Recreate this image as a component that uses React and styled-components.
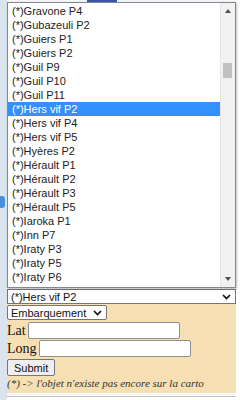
import React from 'react'
import styled, { createGlobalStyle } from 'styled-components'

const Global = createGlobalStyle`
body {
  margin: 0;
  background: #ffffff;
  font-family: 'Liberation Sans', Arial, sans-serif;
}
`

const rivers = [
  'Gravone P4', 'Gubazeuli P2', 'Guiers P1', 'Guiers P2', 'Guil P9', 'Guil P10',
  'Guil P11', 'Hers vif P2', 'Hers vif P4', 'Hers vif P5', 'Hyères P2',
  'Hérault P1', 'Hérault P2', 'Hérault P3', 'Hérault P5', 'Iaroka P1',
  'Inn P7', 'Iraty P3', 'Iraty P5', 'Iraty P6'
]

const Page = styled.div`
display: flex;
width: 240px;
height: 400px;
overflow: hidden;
`

const MapEdge = styled.div`
position: relative;
width: 7px;
background: #d9e4ee;
flex-shrink: 0;
`

const MapMark = styled.div`
position: absolute;
top: 196px;
left: -4px;
width: 9px;
height: 12px;
border-radius: 3px;
background: #4a90d9;
`

const Column = styled.div`
width: 229px;
display: flex;
flex-direction: column;
`

const TopArea = styled.div`
height: 289px;
background: #f3f5f7;
position: relative;
`

const Logo = styled.div`
position: absolute;
top: 0;
left: 80px;
width: 30px;
height: 3px;
background: #3b55a8;
`

const Panel = styled.div`
background: #f6dfb3;
display: flex;
flex-direction: column;
align-items: flex-start;
`

const SelectWrap = styled.div`
position: relative;
width: 229px;
`

const Closed = styled.div`
box-sizing: border-box;
display: flex;
align-items: center;
justify-content: space-between;
height: ${p => p.$h}px;
width: ${p => p.$w}px;
padding: 0 4px 0 3px;
background: #ffffff;
border: 1px solid #767676;
border-radius: ${p => p.$r}px;
font-size: 11px;
color: #111;
`

const Chevron = () => (
  <svg width="9" height="6" viewBox="0 0 9 6">
    <path d="M1 1 L4.5 4.5 L8 1" fill="none" stroke="#111" strokeWidth="1.7" />
  </svg>
)

const Popup = styled.div`
position: absolute;
left: 0;
bottom: 100%;
margin-bottom: 1px;
box-sizing: border-box;
width: 229px;
height: 286px;
background: #ffffff;
border: 1px solid #828790;
display: flex;
box-shadow: 1px 1px 2px rgba(0,0,0,0.25);
`

const List = styled.div`
flex: 1;
padding-top: 1px;
`

const Item = styled.div`
height: 14px;
line-height: 14px;
padding-left: 4px;
font-size: 11px;
color: ${p => (p.$sel ? '#ffffff' : '#222')};
background: ${p => (p.$sel ? '#3390ff' : 'transparent')};
white-space: nowrap;
`

const Scroll = styled.div`
width: 14px;
background: #f1f1f1;
border-left: 1px solid #e6e6e6;
position: relative;
`

const Arrow = styled.div`
position: absolute;
left: 4px;
${p => (p.$up ? 'top: 6px;' : 'bottom: 6px;')}
width: 0;
height: 0;
border-left: 3px solid transparent;
border-right: 3px solid transparent;
${p => (p.$up ? 'border-bottom: 4px solid #505050;' : 'border-top: 4px solid #505050;')}
`

const Thumb = styled.div`
position: absolute;
left: 2px;
top: 60px;
width: 9px;
height: 15px;
background: #c1c1c1;
`

const Row = styled.div`
display: flex;
align-items: center;
margin-top: ${p => p.$mt || 0}px;
`

const Label = styled.span`
font-family: 'Liberation Serif', 'Times New Roman', serif;
font-size: 14px;
color: #111;
margin-right: 2px;
`

const Input = styled.div`
box-sizing: border-box;
width: 152px;
height: 17px;
background: #fff;
border: 1px solid #8f8f8f;
border-radius: 2px;
`

const Button = styled.div`
box-sizing: border-box;
margin-top: 2px;
height: 17px;
padding: 0 6px;
display: flex;
align-items: center;
font-size: 11px;
color: #111;
background: #efefef;
border: 1px solid #767676;
border-radius: 2px;
`

const Note = styled.div`
font-family: 'Liberation Serif', 'Times New Roman', serif;
font-style: italic;
font-size: 11px;
line-height: 13px;
color: #333;
margin: 1px 0 3px;
`

const Footer = styled.div`
flex: 1;
background: #ffffff;
border-top: 2px solid #f6f6f6;
`

const FooterLine = styled.div`
margin-top: 1px;
border-top: 1px solid #bfbfbf;
`

export default function App() {
  return (
    <>
      <Global />
      <Page>
        <MapEdge>
          <MapMark />
        </MapEdge>
        <Column>
          <TopArea>
            <Logo />
          </TopArea>
          <Panel>
            <SelectWrap>
              <Popup>
                <List>
                  {rivers.map(r => (
                    <Item key={r} $sel={r === 'Hers vif P2'}>(*){r}</Item>
                  ))}
                </List>
                <Scroll>
                  <Arrow $up />
                  <Thumb />
                  <Arrow />
                </Scroll>
              </Popup>
              <Closed $h={15} $w={229} $r={0}>
                <span>(*)Hers vif P2</span>
                <Chevron />
              </Closed>
            </SelectWrap>
            <Row $mt={1}>
              <Closed $h={15} $w={100} $r={2}>
                <span>Embarquement</span>
                <Chevron />
              </Closed>
            </Row>
            <Row $mt={2}>
              <Label>Lat</Label>
              <Input />
            </Row>
            <Row $mt={1}>
              <Label>Long</Label>
              <Input />
            </Row>
            <Button>Submit</Button>
            <Note>(*) -&gt; l'objet n'existe pas encore sur la carto</Note>
          </Panel>
          <Footer>
            <FooterLine />
          </Footer>
        </Column>
      </Page>
    </>
  )
}
